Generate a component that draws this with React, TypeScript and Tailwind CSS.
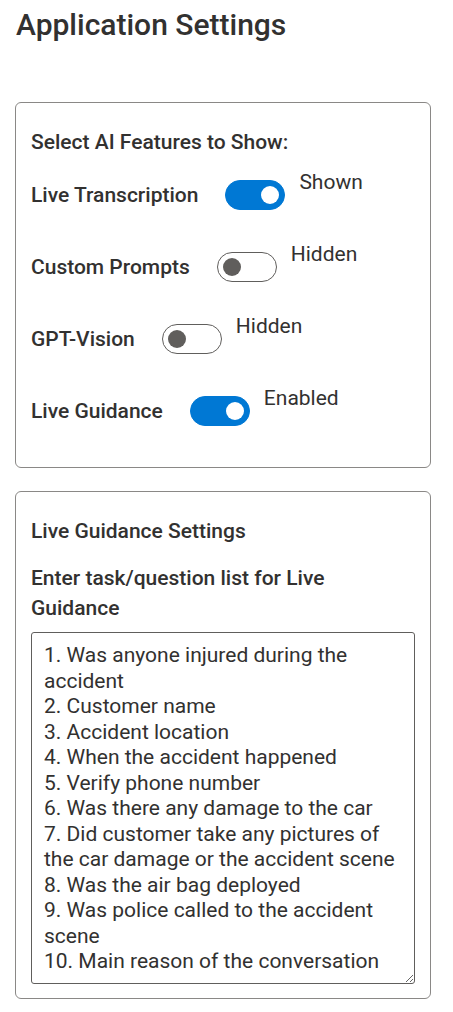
import React, { useState } from 'react';

type Feature = {
  label: string;
  on: string;
  off: string;
  checked: boolean;
};

const initialFeatures: Feature[] = [
  { label: 'Live Transcription', on: 'Shown', off: 'Hidden', checked: true },
  { label: 'Custom Prompts', on: 'Shown', off: 'Hidden', checked: false },
  { label: 'GPT-Vision', on: 'Shown', off: 'Hidden', checked: false },
  { label: 'Live Guidance', on: 'Enabled', off: 'Disabled', checked: true },
];

const defaultTasks = `1. Was anyone injured during the accident
2. Customer name
3. Accident location
4. When the accident happened
5. Verify phone number
6. Was there any damage to the car
7. Did customer take any pictures of the car damage or the accident scene
8. Was the air bag deployed
9. Was police called to the accident scene
10. Main reason of the conversation`;

const Toggle: React.FC<{ checked: boolean; onChange: () => void }> = ({ checked, onChange }) => (
  <button
    type="button"
    role="switch"
    aria-checked={checked}
    onClick={onChange}
    className={
      checked
        ? 'flex h-[30px] w-[60px] shrink-0 items-center justify-end rounded-full border border-[#0078d4] bg-[#0078d4] px-[5px]'
        : 'flex h-[30px] w-[60px] shrink-0 items-center justify-start rounded-full border border-[#605e5c] bg-white px-[5px]'
    }
  >
    <span className={checked ? 'h-[18px] w-[18px] rounded-full bg-white' : 'h-[18px] w-[18px] rounded-full bg-[#605e5c]'} />
  </button>
);

export default function App() {
  const [features, setFeatures] = useState(initialFeatures);
  const [tasks, setTasks] = useState(defaultTasks);

  const flip = (i: number) =>
    setFeatures(fs => fs.map((f, j) => (j === i ? { ...f, checked: !f.checked } : f)));

  return (
    <div className="min-h-screen bg-white px-[15px] pt-[5px] font-['Roboto',sans-serif] text-[#323130]">
      <h1 className="pl-px text-[30px] font-medium leading-[40px]">Application Settings</h1>

      <div className="mt-[57px] w-[416px] rounded-md border border-[#8a8886] px-[15px] pt-[24px] pb-[41px]">
        <div className="text-[21px] font-medium leading-[30px]">Select AI Features to Show:</div>
        <div className="mt-[23px] flex flex-col gap-[42px]">
          {features.map((f, i) => (
            <div key={f.label} className="flex h-[30px] items-center">
              <span className="mr-[27px] text-[21px] font-medium leading-[30px]">{f.label}</span>
              <Toggle checked={f.checked} onChange={() => flip(i)} />
              <span className="ml-[14px] -mt-[13px] self-start text-[21px] leading-[30px]">
                {f.checked ? f.on : f.off}
              </span>
            </div>
          ))}
        </div>
      </div>

      <div className="mt-[23px] w-[416px] rounded-md border border-[#8a8886] px-[15px] pt-[24px] pb-[14px]">
        <div className="text-[21px] font-medium leading-[30px]">Live Guidance Settings</div>
        <label htmlFor="tasks" className="mt-[17px] block text-[21px] font-medium leading-[30px]">
          Enter task/question list for Live Guidance
        </label>
        <textarea
          id="tasks"
          value={tasks}
          onChange={e => setTasks(e.target.value)}
          className="mt-[9px] block h-[352px] w-full overflow-hidden rounded-[3px] border border-[#605e5c] px-[12px] pt-[10px] pb-[8px] text-[21px] leading-[25.5px] text-[#323130] outline-none"
        />
      </div>
    </div>
  );
}
